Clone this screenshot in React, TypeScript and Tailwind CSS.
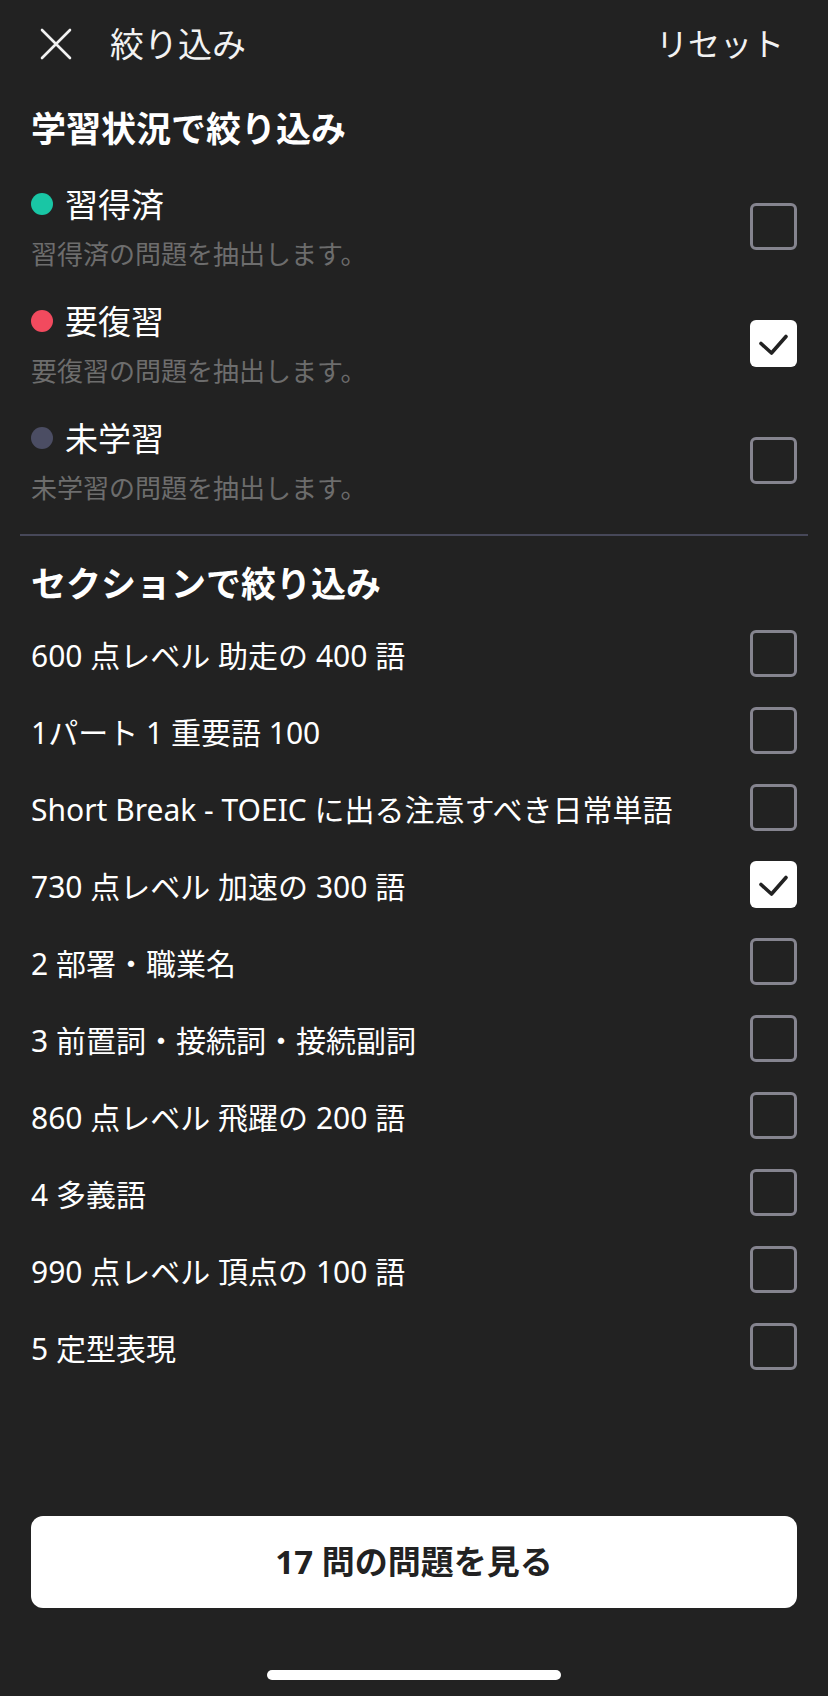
import React from 'react';

const font = { fontFamily: '"Noto Sans", "Noto Sans CJK JP", sans-serif' };

type Status = { label: string; desc: string; dot: string; checked: boolean };

const statuses: Status[] = [
  { label: '習得済', desc: '習得済の問題を抽出します。', dot: 'bg-[#19c6a5]', checked: false },
  { label: '要復習', desc: '要復習の問題を抽出します。', dot: 'bg-[#f24a5e]', checked: true },
  { label: '未学習', desc: '未学習の問題を抽出します。', dot: 'bg-[#4b4d63]', checked: false },
];

const sections: { label: string; checked: boolean }[] = [
  { label: '600 点レベル 助走の 400 語', checked: false },
  { label: '1パート 1 重要語 100', checked: false },
  { label: 'Short Break - TOEIC に出る注意すべき日常単語', checked: false },
  { label: '730 点レベル 加速の 300 語', checked: true },
  { label: '2 部署・職業名', checked: false },
  { label: '3 前置詞・接続詞・接続副詞', checked: false },
  { label: '860 点レベル 飛躍の 200 語', checked: false },
  { label: '4 多義語', checked: false },
  { label: '990 点レベル 頂点の 100 語', checked: false },
  { label: '5 定型表現', checked: false },
];

const Checkbox: React.FC<{ checked: boolean }> = ({ checked }) =>
  checked ? (
    <div className="w-[47px] h-[47px] rounded-[6px] bg-white flex items-center justify-center shrink-0">
      <svg width="47" height="47" viewBox="0 0 47 47" fill="none">
        <path d="M11 23.5 L21.5 33 L36 16.5" stroke="#222222" strokeWidth="3.6" strokeLinecap="round" strokeLinejoin="round" />
      </svg>
    </div>
  ) : (
    <div className="w-[47px] h-[47px] rounded-[6px] border-[3px] border-[#85848f] shrink-0" />
  );

export default function App() {
  return (
    <div className="w-[828px] h-[1696px] bg-[#222222] text-white flex flex-col" style={font}>
      {/* header */}
      <div className="h-[88px] flex items-center pl-[40px] pr-[44px]">
        <svg width="32" height="32" viewBox="0 0 32 32" fill="none">
          <path d="M2 2 L30 30 M30 2 L2 30" stroke="#f2f2f2" strokeWidth="2.6" strokeLinecap="round" />
        </svg>
        <span className="ml-[38px] text-[34px] leading-none text-[#f2f2f2]">絞り込み</span>
        <span className="ml-auto text-[32px] leading-none text-[#f2f2f2]">リセット</span>
      </div>

      {/* learning status */}
      <h2 className="mt-[20px] px-[31px] h-[42px] leading-[42px] text-[35px] font-bold">学習状況で絞り込み</h2>
      <div className="mt-[18px] px-[31px]">
        {statuses.map((s) => (
          <div key={s.label} className="h-[117px] flex items-center">
            <div className="flex-1 flex flex-col gap-[15px]">
              <div className="flex items-center h-[40px]">
                <span className={`w-[22px] h-[22px] rounded-full ${s.dot}`} />
                <span className="ml-[12px] text-[33px] leading-none">{s.label}</span>
              </div>
              <div className="h-[30px] leading-[30px] text-[26px] text-[#6d6d6d]">{s.desc}</div>
            </div>
            <Checkbox checked={s.checked} />
          </div>
        ))}
      </div>

      <div className="mt-[15px] mx-[20px] h-[2px] bg-[#474859]" />

      {/* sections */}
      <h2 className="mt-[27px] px-[31px] h-[42px] leading-[42px] text-[35px] font-bold">セクションで絞り込み</h2>
      <div className="mt-[12px] px-[31px]">
        {sections.map((s) => (
          <div key={s.label} className="h-[77px] flex items-center justify-between">
            <span className="text-[30px] leading-none">{s.label}</span>
            <div className="-mt-[5px]">
              <Checkbox checked={s.checked} />
            </div>
          </div>
        ))}
      </div>

      {/* footer */}
      <div className="mt-auto px-[31px]">
        <button className="w-full h-[92px] rounded-[12px] bg-white text-[#222222] text-[33px] font-bold flex items-center justify-center">
          17 問の問題を見る
        </button>
      </div>
      <div className="mt-[62px] mb-[16px] flex justify-center">
        <div className="w-[294px] h-[10px] rounded-full bg-white" />
      </div>
    </div>
  );
}
